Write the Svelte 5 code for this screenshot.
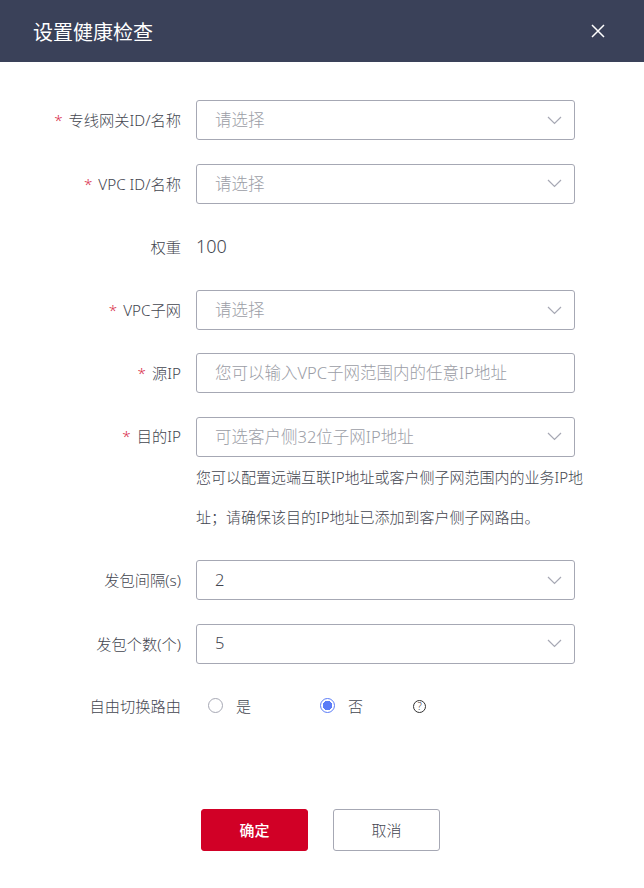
<script>
  const chevron = 'M1 1l6.5 6.5L14 1';
  let route = $state('no');
</script>

{#snippet arrow()}
  <svg class="arrow" width="15" height="9" viewBox="0 0 15 9" fill="none"><path d={chevron} stroke="#a6a8b4" stroke-width="1.2" /></svg>
{/snippet}

{#snippet select(text, isValue = false)}
  <div class="control select">
    <span class:placeholder={!isValue} class:value={isValue}>{text}</span>
    {@render arrow()}
  </div>
{/snippet}

<div class="dialog">
  <header>
    <h1>设置健康检查</h1>
    <svg class="close" width="14" height="14" viewBox="0 0 14 14" fill="none"><path d="M1 1l12 12M13 1L1 13" stroke="#fff" stroke-width="1.5" /></svg>
  </header>

  <form>
    <div class="row">
      <div class="label"><i>*</i>专线网关ID/名称</div>
      {@render select('请选择')}
    </div>
    <div class="row">
      <div class="label"><i>*</i>VPC ID/名称</div>
      {@render select('请选择')}
    </div>
    <div class="row">
      <div class="label">权重</div>
      <div class="weight">100</div>
    </div>
    <div class="row">
      <div class="label"><i>*</i>VPC子网</div>
      {@render select('请选择')}
    </div>
    <div class="row">
      <div class="label"><i>*</i>源IP</div>
      <div class="control"><span class="placeholder">您可以输入VPC子网范围内的任意IP地址</span></div>
    </div>
    <div class="row top">
      <div class="label"><i>*</i>目的IP</div>
      <div class="stack">
        {@render select('可选客户侧32位子网IP地址')}
        <p class="help">您可以配置远端互联IP地址或客户侧子网范围内的业务IP地址；请确保该目的IP地址已添加到客户侧子网路由。</p>
      </div>
    </div>
    <div class="row">
      <div class="label">发包间隔(s)</div>
      {@render select('2', true)}
    </div>
    <div class="row">
      <div class="label">发包个数(个)</div>
      {@render select('5', true)}
    </div>
    <div class="row radios">
      <div class="label">自由切换路由</div>
      <div class="radio-group">
        <button type="button" class="radio" onclick={() => (route = 'yes')}>
          <span class="dot" class:on={route === 'yes'}></span>是
        </button>
        <button type="button" class="radio" onclick={() => (route = 'no')}>
          <span class="dot" class:on={route === 'no'}></span>否
        </button>
        <span class="tip">?</span>
      </div>
    </div>
  </form>

  <footer>
    <button type="button" class="btn primary">确定</button>
    <button type="button" class="btn">取消</button>
  </footer>
</div>

<style>
  :global(body) {
    margin: 0;
    background: #fff;
    font-family: "Noto Sans", "Noto Sans CJK SC", sans-serif;
  }

  .dialog {
    width: 644px;
    height: 888px;
    color: #43464f;
    font-size: 15px;
    font-weight: 300;
  }

  header {
    height: 62px;
    background: #3a4159;
    display: flex;
    align-items: center;
    justify-content: space-between;
    padding: 0 39px 0 33px;
  }

  h1 {
    margin: 0;
    font-size: 20px;
    font-weight: 400;
    color: #fff;
  }

  form {
    display: flex;
    flex-direction: column;
    gap: 23.25px;
    padding-top: 38.45px;
  }

  .row {
    display: flex;
    align-items: center;
    min-height: 40px;
  }

  .row.top {
    align-items: flex-start;
  }

  .label {
    width: 181px;
    flex: none;
    margin-right: 15px;
    text-align: right;
    font-size: 15.25px;
    line-height: 38px;
    white-space: nowrap;
  }

  .label i {
    color: #d9304c;
    font-style: normal;
    margin-right: 6px;
  }

  .control {
    width: 379px;
    height: 40px;
    box-sizing: border-box;
    border: 1px solid #a6a8b4;
    border-radius: 3px;
    padding: 0 12px 2px 18px;
    display: flex;
    align-items: center;
    justify-content: space-between;
    font-size: 16.5px;
  }

  .arrow {
    margin-top: 2px;
  }

  .placeholder {
    color: #9b9da6;
  }

  .value {
    color: #43464f;
  }

  .weight {
    font-size: 18px;
    margin-top: -2px;
  }

  .stack {
    width: 392px;
  }

  .help {
    margin: -1px 0 -0.5px;
    padding: 1px 0;
    line-height: 40px;
    font-size: 15px;
  }

  .radios {
    min-height: 24px;
  }

  .radio-group {
    display: flex;
    align-items: center;
    padding-left: 12px;
  }

  .radio {
    width: 112px;
    display: flex;
    align-items: center;
    gap: 13px;
    padding: 0;
    border: none;
    background: none;
    color: inherit;
    font: inherit;
    font-size: 15px;
  }

  .dot {
    width: 15px;
    height: 15px;
    box-sizing: border-box;
    border: 1px solid #a6a8b4;
    border-radius: 50%;
    background: #fff;
  }

  .dot.on {
    border-color: #5b7cf7;
    background: radial-gradient(circle, #5b7cf7 0 4.5px, #fff 5px);
  }

  .tip {
    width: 13px;
    height: 13px;
    box-sizing: border-box;
    border: 1px solid #333;
    border-radius: 50%;
    margin-left: -19px;
    margin-top: 2px;
    font-size: 10px;
    line-height: 11px;
    text-align: center;
    color: #333;
  }

  footer {
    display: flex;
    gap: 25px;
    padding-left: 201px;
    margin-top: 84px;
  }

  .btn {
    width: 107px;
    height: 42px;
    box-sizing: border-box;
    border: 1px solid #a6a8b4;
    border-radius: 3px;
    background: #fff;
    color: #43464f;
    font: inherit;
    font-size: 15px;
    padding: 0;
  }

  .btn.primary {
    background: #d10026;
    border-color: #d10026;
    color: #fff;
    font-weight: 500;
  }
</style>
